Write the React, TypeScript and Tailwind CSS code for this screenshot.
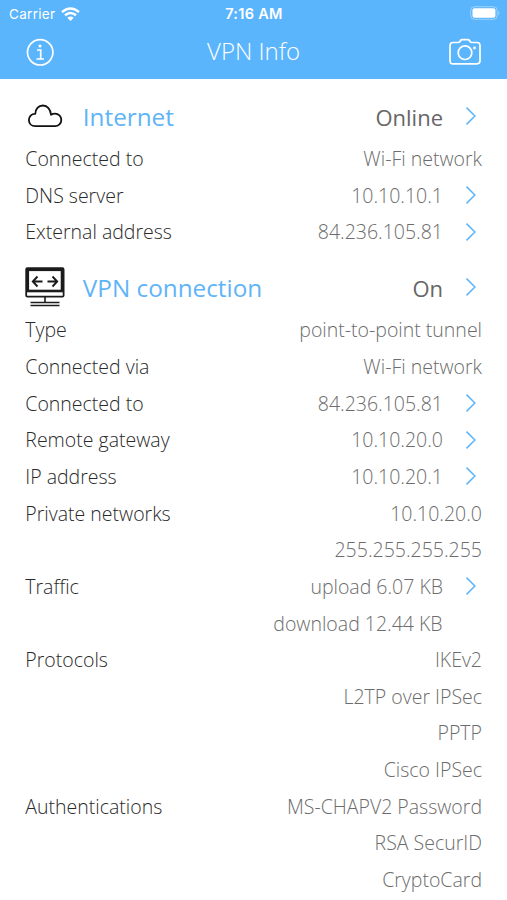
import type { ReactNode } from 'react';

type Line = { label?: string; value: string; link?: boolean; inset?: boolean };

const internet: Line[] = [
  { label: 'Connected to', value: 'Wi-Fi network' },
  { label: 'DNS server', value: '10.10.10.1', link: true },
  { label: 'External address', value: '84.236.105.81', link: true },
];

const vpn: Line[] = [
  { label: 'Type', value: 'point-to-point tunnel' },
  { label: 'Connected via', value: 'Wi-Fi network' },
  { label: 'Connected to', value: '84.236.105.81', link: true },
  { label: 'Remote gateway', value: '10.10.20.0', link: true },
  { label: 'IP address', value: '10.10.20.1', link: true },
  { label: 'Private networks', value: '10.10.20.0' },
  { value: '255.255.255.255' },
  { label: 'Traffic', value: 'upload 6.07 KB', link: true },
  { value: 'download 12.44 KB', inset: true },
  { label: 'Protocols', value: 'IKEv2' },
  { value: 'L2TP over IPSec' },
  { value: 'PPTP' },
  { value: 'Cisco IPSec' },
  { label: 'Authentications', value: 'MS-CHAPV2 Password' },
  { value: 'RSA SecurID' },
  { value: 'CryptoCard' },
];

function Chevron() {
  return (
    <svg className="mr-[5px] mb-px ml-[22px] h-5 w-3 shrink-0" viewBox="0 0 12 20" fill="none" stroke="#5fb4f8" strokeWidth="1.5">
      <path d="M1.500 1.600 9.900 10 1.500 18.400" />
    </svg>
  );
}

function Row({ label, value, link, inset }: Line) {
  return (
    <div className="flex h-[36.65px] items-center justify-between text-[19.5px] font-light leading-[36px]">
      <span className="text-[#2a2a2a]">{label}</span>
      <span className={inset ? 'mr-[39.4px] flex items-center text-[#6c6c6c]' : 'flex items-center text-[#6c6c6c]'}>
        {value}
        {link && <Chevron />}
      </span>
    </div>
  );
}

function Heading({ icon, title, status }: { icon: ReactNode; title: string; status: string }) {
  return (
    <div className="flex h-[61.3px] items-center pt-[12px]">
      <div className="flex w-[57.5px] items-center">{icon}</div>
      <h2 className="flex-1 pt-px text-[24.3px] leading-8 text-[#5fb4f8]">{title}</h2>
      <span className="pt-0.5 text-[22px] leading-8 text-[#666666]">{status}</span>
      <Chevron />
    </div>
  );
}

function CloudIcon() {
  return (
    <svg className="-mt-px ml-0.5 h-6 w-[36px]" viewBox="0 0 36 24" fill="none" stroke="#111" strokeWidth="1.8" strokeLinejoin="round">
      <path d="M8.200 22.200H28a6.300 6.300 0 0 0 0-12.600q-2.200 0-4 1.200C23.600 5.200 20.300 1.500 15.900 1.500 11.500 1.500 8.300 5 8.300 9.800 4.400 9.600 1.900 12.500 1.900 16 1.900 19.600 4.600 22.200 8.200 22.200Z" />
    </svg>
  );
}

function MonitorIcon() {
  return (
    <svg className="-mt-px h-10 w-10" viewBox="0 0 40 40" fill="none" stroke="#1b1b1b">
      <rect x="1.200" y="1.200" width="37.400" height="28.400" rx="1.200" strokeWidth="1.800" />
      <rect x="2.800" y="2.800" width="34.200" height="21.200" strokeWidth="2.600" />
      <path d="M20 29.500v6M5.500 35.500h29M5.500 38.500h29" strokeWidth="1.600" />
      <path d="M8 14.500h9.500M12.500 9.500 7.800 14.500l4.700 5M22.500 14.500H32M27.500 9.500l4.700 5-4.700 5" strokeWidth="1.900" />
    </svg>
  );
}

export default function App() {
  return (
    <div className="h-[900px] w-[507px] overflow-hidden bg-white font-['Open_Sans','Noto_Sans',sans-serif]">
      <header className="h-[79px] bg-[#5bb5fc] text-white">
        <div className="grid h-7 grid-cols-3 items-center pr-[7px] pl-[9px] font-['Inter',sans-serif] text-[13.5px]">
          <div className="flex items-center gap-[6px]">
            <span className="tracking-[0.3px]">Carrier</span>
            <svg className="-mt-px h-[14px] w-[19px]" viewBox="0 0 19 14" fill="none" stroke="white" strokeWidth="2.500">
              <path d="M1 5.100Q9.500-2.200 18 5.100M4 8.300q5.500-4.600 11 0" />
              <path d="M6.300 10.800q3.200-2.600 6.400 0L9.500 14Z" fill="white" stroke="none" />
            </svg>
          </div>
          <span className="-ml-px text-center text-[14.5px] font-semibold tracking-[0.3px]">7:16 AM</span>
          <svg className="-mt-0.5 -mr-px ml-auto h-[14px] w-[31px]" viewBox="0 0 31 14">
            <rect x=".7" y=".7" width="26.500" height="12.600" rx="3.800" fill="none" stroke="white" strokeOpacity=".4" />
            <rect x="2.500" y="2.200" width="22.900" height="9.600" rx="2" fill="white" />
            <path d="M28.500 4.800q2 2.200 0 4.400Z" fill="white" fillOpacity=".5" />
          </svg>
        </div>
        <div className="flex h-[51px] items-start justify-between pr-[26px] pl-[26px]">
          <svg className="mt-[10px] h-7 w-7" viewBox="0 0 28 28" fill="none" stroke="white" strokeWidth="1.700">
            <circle cx="14.200" cy="14.300" r="12.700" />
            <path d="M11 12h3.700v9M10.500 21h7.500" />
            <circle cx="14" cy="8" r="1.500" fill="white" stroke="none" />
          </svg>
          <h1 className="mt-[7px] ml-[4px] text-[24px] leading-8 font-light">VPN Info</h1>
          <svg className="mt-[10px] h-7 w-8" viewBox="0 0 32 28" fill="none" stroke="white" strokeWidth="1.700" strokeLinejoin="round">
            <path d="M4 4.500h5.200q1.100 0 1.700-1l.5-.8q.6-1 1.800-1h5.600q1.200 0 1.800 1l.5.8q.6 1 1.700 1H28q3 0 3 3v15.300q0 3-3 3H4q-3 0-3-3V7.500q0-3 3-3Z" />
            <circle cx="16" cy="14.700" r="6.800" />
            <circle cx="25.500" cy="10" r="1.400" fill="white" stroke="none" />
          </svg>
        </div>
      </header>
      <main className="pt-[0.6px] pr-[25px] pl-[25.3px]">
        <section>
          <Heading icon={<CloudIcon />} title="Internet" status="Online" />
          {internet.map((line, i) => <Row key={i} {...line} />)}
        </section>
        <section>
          <Heading icon={<MonitorIcon />} title="VPN connection" status="On" />
          {vpn.map((line, i) => <Row key={i} {...line} />)}
        </section>
      </main>
    </div>
  );
}
